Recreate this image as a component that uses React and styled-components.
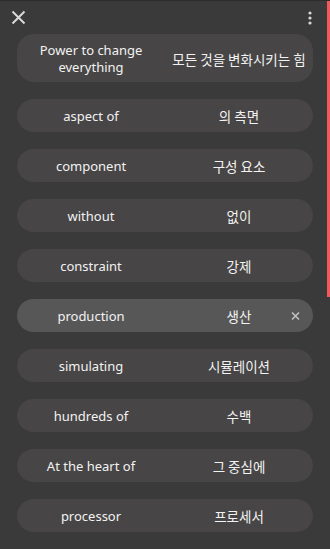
import React from "react";
import styled, { createGlobalStyle } from "styled-components";

const Global = createGlobalStyle`
  html, body { margin: 0; padding: 0; background: #3a3a3a; }
  body { font-family: "Noto Sans", "Noto Sans CJK KR", sans-serif; }
`;

const Screen = styled.div`
  position: relative;
  width: 330px;
  height: 549px;
  overflow: hidden;
  background: #3a3a3a;
  border-top: 1px solid #2c2c2c;
  box-sizing: border-box;
`;

const Header = styled.div`
  display: flex;
  align-items: center;
  justify-content: space-between;
  height: 33px;
  padding: 0 12px 0 10px;
  box-sizing: border-box;
`;

const IconButton = styled.button`
  display: flex;
  align-items: center;
  justify-content: center;
  width: 16px;
  height: 16px;
  padding: 0;
  border: 0;
  background: none;
  color: #d8d8d8;
`;

const List = styled.div`
  display: flex;
  flex-direction: column;
  gap: 17px;
  padding: 0 17px;
`;

const Row = styled.div`
  position: relative;
  display: grid;
  grid-template-columns: 1fr 1fr;
  align-items: center;
  min-height: 33px;
  padding: 8px 0 6px;
  box-sizing: border-box;
  border-radius: 17px;
  background: ${(p) => (p.$active ? "#575757" : "#474545")};
  color: #f2f2f2;
`;

const Term = styled.div`
  text-align: center;
  font-size: 13px;
  line-height: 17px;
  padding: 0 8px;
`;

const Translation = styled.div`
  text-align: center;
  font-family: "Noto Sans CJK KR", "Noto Sans", sans-serif;
  font-size: 13.5px;
  line-height: 17px;
  white-space: nowrap;
`;

const Remove = styled.span`
  position: absolute;
  right: 13px;
  top: 50%;
  transform: translateY(-50%);
  display: flex;
  color: #c4c4c4;
`;

const Thumb = styled.div`
  position: absolute;
  right: 0;
  top: 0;
  width: 3px;
  height: 296px;
  background: #f05a5a;
`;

const items = [
  ["Power to change everything", "모든 것을 변화시키는 힘"],
  ["aspect of", "의 측면"],
  ["component", "구성 요소"],
  ["without", "없이"],
  ["constraint", "강제"],
  ["production", "생산", true],
  ["simulating", "시뮬레이션"],
  ["hundreds of", "수백"],
  ["At the heart of", "그 중심에"],
  ["processor", "프로세서"],
];

export default function App() {
  return (
    <Screen>
      <Global />
      <Header>
        <IconButton aria-label="close">
          <svg width="15" height="15" viewBox="0 0 15 15">
            <path d="M1.5 1.5 L13.5 13.5 M13.5 1.5 L1.5 13.5" stroke="currentColor" strokeWidth="2" />
          </svg>
        </IconButton>
        <IconButton aria-label="menu">
          <svg width="4" height="14" viewBox="0 0 4 14">
            <circle cx="2" cy="2" r="1.6" fill="currentColor" />
            <circle cx="2" cy="7" r="1.6" fill="currentColor" />
            <circle cx="2" cy="12" r="1.6" fill="currentColor" />
          </svg>
        </IconButton>
      </Header>
      <List>
        {items.map(([t, k, active]) => (
          <Row key={t} $active={active}>
            <Term>{t}</Term>
            <Translation>{k}</Translation>
            {active && (
              <Remove>
                <svg width="9" height="9" viewBox="0 0 9 9">
                  <path d="M1 1 L8 8 M8 1 L1 8" stroke="currentColor" strokeWidth="1.5" />
                </svg>
              </Remove>
            )}
          </Row>
        ))}
      </List>
      <Thumb />
    </Screen>
  );
}
